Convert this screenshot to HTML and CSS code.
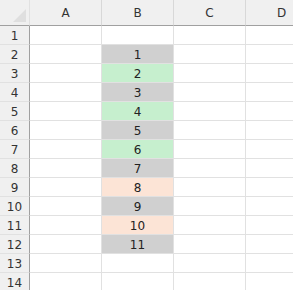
FILE: index.html
```html
<!DOCTYPE html>
<html lang="en">
<head>
    <meta charset="UTF-8">
    <meta name="viewport" content="width=device-width, initial-scale=1.0">
    <title>Sheet</title>
    <link rel="stylesheet" href="styles.css">
</head>
<body>
    <div class="frame">
        <div class="sheet">
            <div class="corner"><span class="corner-mark"></span></div>
            <div class="col-head">A</div>
            <div class="col-head">B</div>
            <div class="col-head">C</div>
            <div class="col-head">D</div>

            <div class="row-head">1</div><div class="cell"></div><div class="cell"></div><div class="cell"></div><div class="cell"></div>
            <div class="row-head">2</div><div class="cell"></div><div class="cell gray">1</div><div class="cell"></div><div class="cell"></div>
            <div class="row-head">3</div><div class="cell"></div><div class="cell green">2</div><div class="cell"></div><div class="cell"></div>
            <div class="row-head">4</div><div class="cell"></div><div class="cell gray">3</div><div class="cell"></div><div class="cell"></div>
            <div class="row-head">5</div><div class="cell"></div><div class="cell green">4</div><div class="cell"></div><div class="cell"></div>
            <div class="row-head">6</div><div class="cell"></div><div class="cell gray">5</div><div class="cell"></div><div class="cell"></div>
            <div class="row-head">7</div><div class="cell"></div><div class="cell green">6</div><div class="cell"></div><div class="cell"></div>
            <div class="row-head">8</div><div class="cell"></div><div class="cell gray">7</div><div class="cell"></div><div class="cell"></div>
            <div class="row-head">9</div><div class="cell"></div><div class="cell peach">8</div><div class="cell"></div><div class="cell"></div>
            <div class="row-head">10</div><div class="cell"></div><div class="cell gray">9</div><div class="cell"></div><div class="cell"></div>
            <div class="row-head">11</div><div class="cell"></div><div class="cell peach">10</div><div class="cell"></div><div class="cell"></div>
            <div class="row-head">12</div><div class="cell"></div><div class="cell gray">11</div><div class="cell"></div><div class="cell"></div>
            <div class="row-head">13</div><div class="cell"></div><div class="cell"></div><div class="cell"></div><div class="cell"></div>
            <div class="row-head">14</div><div class="cell"></div><div class="cell"></div><div class="cell"></div><div class="cell"></div>
        </div>
    </div>
</body>
</html>
```

FILE: styles.css
```css
:root {
    --grid: #e1e1e1;
    --head-bg: #f0f0f0;
    --head-line: #a0a0a0;
    --text: #222222;
    --head-text: #333333;
    --gray: #d0d0d0;
    --green: #c6efce;
    --peach: #fce4d6;
}

body {
    margin: 0;
    background: #ffffff;
    font-family: "DejaVu Sans", Verdana, sans-serif;
    font-size: 12px;
    color: var(--text);
}

.frame {
    width: 293px;
    height: 290px;
    overflow: hidden;
}

.sheet {
    display: grid;
    grid-template-columns: 30px repeat(4, 72px);
    grid-template-rows: 26px repeat(14, 19px);
}

.sheet > div {
    box-sizing: border-box;
    display: flex;
    align-items: center;
    justify-content: center;
}

.corner {
    background: var(--head-bg);
    border-right: 1px solid var(--grid);
    border-bottom: 1px solid var(--head-line);
    position: relative;
}

.corner-mark {
    position: absolute;
    right: 3px;
    bottom: 3px;
    width: 0;
    height: 0;
    border-left: 13px solid transparent;
    border-bottom: 13px solid #dfdfdf;
}

.col-head {
    background: var(--head-bg);
    color: var(--head-text);
    border-right: 1px solid #d8d8d8;
    border-bottom: 1px solid var(--head-line);
    padding-top: 1px;
}

.row-head {
    background: var(--head-bg);
    color: var(--head-text);
    border-right: 1px solid var(--head-line);
    border-bottom: 1px solid var(--grid);
    padding-top: 1px;
}

.cell {
    border-right: 1px solid var(--grid);
    border-bottom: 1px solid var(--grid);
    padding-top: 1px;
}

.gray {
    background: var(--gray);
}

.green {
    background: var(--green);
}

.peach {
    background: var(--peach);
}
```
